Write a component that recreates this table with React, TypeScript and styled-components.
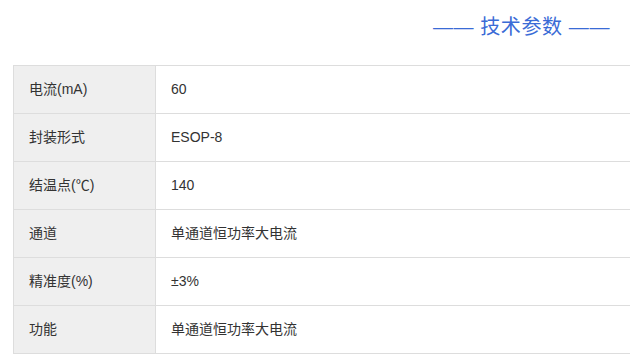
import React from 'react';
import styled, { createGlobalStyle } from 'styled-components';

const GlobalStyle = createGlobalStyle`
  html, body {
    margin: 0;
    padding: 0;
    background: #fff;
    overflow: hidden;
  }
  body {
    font-family: "Liberation Sans", "Noto Sans CJK SC", sans-serif;
  }
`;

const Page = styled.div`
  width: 640px;
  padding-left: 13px;
`;

const Header = styled.div`
  display: flex;
  justify-content: flex-end;
  height: 65px;
  padding-right: 43px;
  box-sizing: border-box;
`;

const Title = styled.h2`
  margin: 13px 0 0;
  font-size: 20px;
  font-weight: normal;
  line-height: 28px;
  color: #3a6bd6;
  letter-spacing: 0.6px;
`;

const Table = styled.table`
  width: 640px;
  border-collapse: collapse;
  font-size: 14px;
  line-height: 20px;
  color: #333;
`;

const Row = styled.tr`
  height: 48px;
`;

const Cell = styled.td<{ $label?: boolean }>`
  border: 1px solid #ddd;
  padding: 0 15px 2px;
  vertical-align: middle;
  background: ${p => (p.$label ? '#efefef' : '#fff')};
  width: ${p => (p.$label ? '111px' : 'auto')};
  box-sizing: content-box;
`;

const specs: [string, string][] = [
  ['电流(mA)', '60'],
  ['封装形式', 'ESOP-8'],
  ['结温点(℃)', '140'],
  ['通道', '单通道恒功率大电流'],
  ['精准度(%)', '±3%'],
  ['功能', '单通道恒功率大电流'],
];

const App = () => (
  <Page>
    <GlobalStyle />
    <Header>
      <Title>—— 技术参数 ——</Title>
    </Header>
    <Table>
      <tbody>
        {specs.map(([label, value]) => (
          <Row key={label}>
            <Cell $label>{label}</Cell>
            <Cell>{value}</Cell>
          </Row>
        ))}
      </tbody>
    </Table>
  </Page>
);

export default App;
